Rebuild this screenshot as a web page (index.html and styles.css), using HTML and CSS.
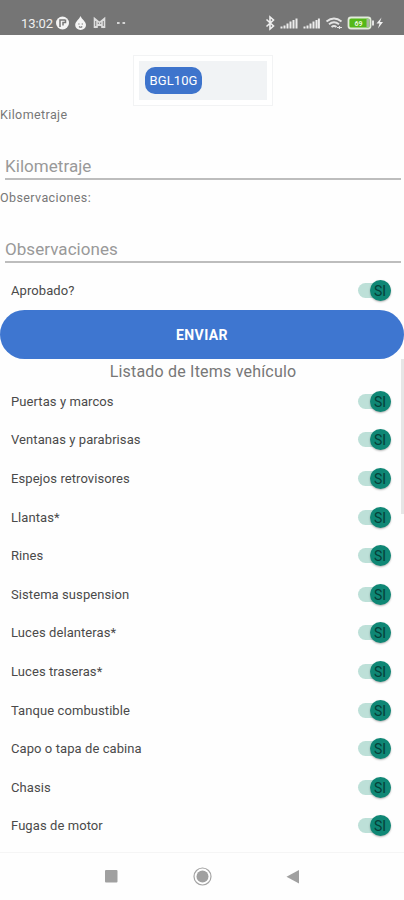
FILE: index.html
```
<!DOCTYPE html>
<html lang="es">
<head>
<meta charset="utf-8">
<title>Inspección de vehículo</title>
<link rel="stylesheet" href="styles.css">
</head>
<body>
<header class="status">
  <span class="time">13:02</span>
  <svg class="left-icons" width="74" height="16" viewBox="0 0 74 16">
    <circle cx="7.500" cy="8" r="6.500" fill="#f4f4f4"/>
    <path d="M5 12V5h5M10.500 4.500v3H8v3" fill="none" stroke="#757575" stroke-width="1.500"/>
    <path d="M25.500 1C26.500 4 31 6.500 31 10a5.400 5 0 0 1-10.800 0C20.200 6.500 24.500 4 25.500 1Z" fill="#f4f4f4"/>
    <path d="M23.300 9h1.200M26.700 9h1.200M24 11.500q1.600 1.500 3.200 0" fill="none" stroke="#757575" stroke-width="1.100"/>
    <path d="M39.500 13V3.500l5 4 5-4V13M42 13V6M47 13V6M40 12.500l4.500-3.500 4.500 3.500" fill="none" stroke="#dedede" stroke-width="1.600"/>
    <path d="M62 8h2.600M67.500 8h2.600" stroke="#d5d5d5" stroke-width="1.800"/>
  </svg>
  <svg class="right-icons" width="122" height="18" viewBox="0 0 122 18">
    <path d="M3.500 5.500l7 6.500-3.500 3V3l3.500 3-7 6.500" fill="none" stroke="#efefef" stroke-width="1.600"/>
    <path d="M18.500 14.500v-2M21.500 14.500v-3M24.500 14.500V9.500M27.500 14.500V7.500M30.500 14.500V6M33.500 14.500V4.500M41.500 14.500v-2M44.500 14.500v-3M47.500 14.500V9.500M50.500 14.500V7.500M53.500 14.500V6M55.900 14.500V4.500" stroke="#ececec" stroke-width="2"/>
    <path d="M63.500 7.500q7.500-6 15 0M66 10.300q5-4 10 0M68.500 13q2.500-2 5 0" fill="none" stroke="#e4e4e4" stroke-width="1.900"/>
    <path d="M74 13.500h5M76.500 12v3" stroke="#e4e4e4" stroke-width="1.200"/>
    <rect x="85.500" y="3.500" width="22" height="11" rx="2.500" fill="#54b818" stroke="#e2eadb" stroke-width="1.800"/>
    <path d="M103.500 5h3v8h-3z" fill="#a9b5a2"/>
    <path d="M109 6.500h2v5h-2z" fill="#e2e2e2"/>
    <text class="charge" x="91.500" y="12.200">69</text>
    <path d="M118.500 3.500l-5 6h3l-1.500 5 5-6.500h-3z" fill="#f2f2f2"/>
  </svg>
</header>
<main class="content">
  <div class="plate-card"><div class="plate-field"><span class="chip">BGL10G</span></div></div>
  <label class="label km-label">Kilometraje</label>
  <div class="field km-field">Kilometraje</div>
  <label class="label obs-label">Observaciones:</label>
  <div class="field obs-field">Observaciones</div>
  <div class="row approve"><span>Aprobado?</span><span class="switch"><span class="thumb">SI</span></span></div>
  <button class="send">ENVIAR</button>
  <section class="items">
    <div class="title">Listado de Items vehículo</div>
    <div class="row"><span>Puertas y marcos</span><span class="switch"><span class="thumb">SI</span></span></div>
    <div class="row"><span>Ventanas y parabrisas</span><span class="switch"><span class="thumb">SI</span></span></div>
    <div class="row"><span>Espejos retrovisores</span><span class="switch"><span class="thumb">SI</span></span></div>
    <div class="row"><span>Llantas*</span><span class="switch"><span class="thumb">SI</span></span></div>
    <div class="row"><span>Rines</span><span class="switch"><span class="thumb">SI</span></span></div>
    <div class="row"><span>Sistema suspension</span><span class="switch"><span class="thumb">SI</span></span></div>
    <div class="row"><span>Luces delanteras*</span><span class="switch"><span class="thumb">SI</span></span></div>
    <div class="row"><span>Luces traseras*</span><span class="switch"><span class="thumb">SI</span></span></div>
    <div class="row"><span>Tanque combustible</span><span class="switch"><span class="thumb">SI</span></span></div>
    <div class="row"><span>Capo o tapa de cabina</span><span class="switch"><span class="thumb">SI</span></span></div>
    <div class="row"><span>Chasis</span><span class="switch"><span class="thumb">SI</span></span></div>
    <div class="row"><span>Fugas de motor</span><span class="switch"><span class="thumb">SI</span></span></div>
    <div class="scrollbar"></div>
  </section>
</main>
<nav class="navbar">
  <svg width="404" height="47" viewBox="0 0 404 47">
    <rect x="105" y="17" width="12.500" height="12.500" rx="1" fill="#a0a0a0"/>
    <circle cx="202.500" cy="23.500" r="8.500" fill="none" stroke="#a4a4a4" stroke-width="1.200"/>
    <circle cx="202.500" cy="23.500" r="6" fill="#a0a0a0"/>
    <path d="M299 17v13.500l-12.500-6.700z" fill="#a0a0a0"/>
  </svg>
</nav>
</body>
</html>
```
FILE: styles.css
```
* { box-sizing: border-box; }
body {
  margin: 0;
  height: 900px;
  overflow: hidden;
  display: flex;
  flex-direction: column;
  background: #fefefe;
  font-family: Roboto, "Liberation Sans", sans-serif;
}
.status {
  height: 35px;
  flex: none;
  display: flex;
  align-items: flex-start;
  padding: 15px 19px 0 21px;
  background: #757575;
}
.time {
  width: 34px;
  color: #efefef;
  font-size: 13px;
  line-height: 17px;
  letter-spacing: -0.1px;
}
.left-icons { flex: none; }
.right-icons { flex: none; margin-left: auto; margin-top: -1px; }
.charge { font-size: 7px; font-weight: 700; fill: #e9f7df; }
.content { height: 817px; flex: none; display: flex; flex-direction: column; }
.plate-card {
  width: 140px;
  height: 51px;
  flex: none;
  margin: 20px 0 0 133px;
  padding: 5px;
  border: 1px solid #f2f3f4;
  background: #fff;
}
.plate-field {
  width: 128px;
  height: 39px;
  padding: 6px;
  background: #f1f3f5;
}
.chip {
  display: flex;
  align-items: center;
  justify-content: center;
  width: 57px;
  height: 27px;
  border-radius: 10px;
  background: #3e74cc;
  color: #fff;
  font-size: 13px;
  letter-spacing: 0.1px;
}
.label {
  height: 18px;
  flex: none;
  color: #777;
  font-size: 12.5px;
  line-height: 18px;
  letter-spacing: 0.4px;
}
.field {
  flex: none;
  height: 30px;
  margin: 0 3px 0 5px;
  border-bottom: 2px solid #bdbdbd;
  color: #999;
  font-size: 17px;
  line-height: 32px;
  letter-spacing: 0.05px;
}
.km-field { margin-top: 26px; }
.obs-label { margin-top: 9px; }
.obs-field { margin-top: 26px; }
.row {
  height: 38.600px;
  flex: none;
  display: flex;
  align-items: center;
  justify-content: space-between;
  padding: 0 13.500px 0 11px;
  color: #4a4a4a;
  font-size: 13px;
  letter-spacing: 0.08px;
}
.approve { margin-top: 8px; height: 39px; }
.switch {
  width: 32.500px;
  height: 15px;
  border-radius: 8px;
  background: #bde0d8;
  display: flex;
  align-items: center;
  justify-content: flex-end;
}
.thumb {
  width: 21px;
  height: 21px;
  flex: none;
  border-radius: 50%;
  background: #0f8775;
  box-shadow: 0 1px 2px rgba(0, 0, 0, 0.3);
  color: #053f38;
  font-size: 14px;
  line-height: 22px;
  text-align: center;
  letter-spacing: 0;
}
.send {
  height: 49px;
  flex: none;
  border: 0;
  padding: 0;
  border-radius: 25px;
  background: #3e76d0;
  color: #fff;
  font: 700 14px/51px Roboto, sans-serif;
  letter-spacing: 0.4px;
}
.items { position: relative; }
.title {
  height: 23px;
  padding-left: 2px;
  color: #777;
  font-size: 16px;
  line-height: 25px;
  letter-spacing: 0.2px;
  text-align: center;
}
.scrollbar {
  position: absolute;
  right: 0;
  top: 0;
  width: 3px;
  height: 155px;
  background: #e6e6e6;
}
.navbar { height: 48px; flex: none; border-top: 1px solid #f5f5f5; }
```
